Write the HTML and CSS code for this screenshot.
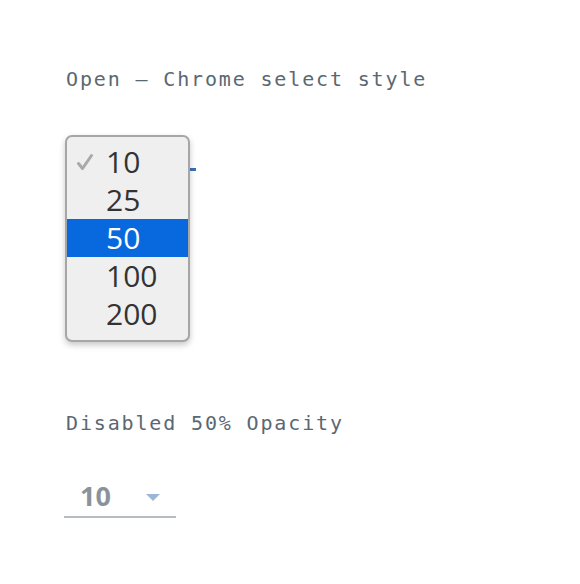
FILE: index.html
```html
<!DOCTYPE html>
<html>
<head>
<meta charset="utf-8">
<link rel="stylesheet" href="styles.css">
</head>
<body>
<main class="page">
  <section class="demo">
    <p class="label">Open — Chrome select style</p>
    <div class="select-wrap">
      <div class="field field-open">
        <svg class="arrow" width="14" height="7" viewBox="0 0 14 7"><path d="M0 0h14L7 7z"/></svg>
      </div>
      <ul class="popup">
        <li class="option"><span class="check"><svg width="18" height="18" viewBox="0 0 18 18"><path d="M2.5 10.5 L6.5 15.5 L15.5 2.5" fill="none" stroke="#a9a9a9" stroke-width="3" stroke-linecap="round" stroke-linejoin="round"/></svg></span><span>10</span></li>
        <li class="option"><span class="check"></span><span>25</span></li>
        <li class="option selected"><span class="check"></span><span>50</span></li>
        <li class="option"><span class="check"></span><span>100</span></li>
        <li class="option"><span class="check"></span><span>200</span></li>
      </ul>
    </div>
  </section>
  <section class="demo demo-disabled">
    <p class="label">Disabled 50% Opacity</p>
    <div class="field field-disabled">
      <span class="value">10</span>
      <svg class="arrow" width="14" height="7" viewBox="0 0 14 7"><path d="M0 0h14L7 7z"/></svg>
    </div>
  </section>
</main>
</body>
</html>
```
FILE: styles.css
```css
html, body {
  margin: 0;
  padding: 0;
  background: #ffffff;
}

.page {
  padding: 67px 0 0 64px;
  font-family: "DejaVu Sans Mono", "Liberation Mono", monospace;
}

.label {
  margin: 0;
  padding-left: 2px;
  font-size: 20px;
  line-height: 24px;
  letter-spacing: 1.85px;
  color: #5a6872;
}

.select-wrap {
  position: relative;
  margin-top: 40px;
  width: 132px;
}

.field {
  box-sizing: border-box;
  height: 40px;
  display: flex;
  align-items: center;
  padding: 0 16px;
  font-family: "Open Sans", "Liberation Sans", sans-serif;
  font-weight: 700;
  font-size: 27px;
  color: #152935;
}

.field .value {
  line-height: 1;
  margin-top: -3px;
}

.field .arrow {
  margin-left: auto;
  fill: #3d70b2;
}

.field-open {
  width: 128px;
  margin-left: 4px;
  border-bottom: 3px solid #3d70b2;
}

.field-disabled {
  width: 112px;
  border-bottom: 2px solid #6d7a85;
  opacity: 0.5;
}

.popup {
  position: absolute;
  top: 4px;
  left: 1px;
  width: 125px;
  box-sizing: border-box;
  margin: 0;
  padding: 6px 0 7px;
  list-style: none;
  background: #efefef;
  border: 2px solid #a6a6a6;
  border-radius: 7px;
  box-shadow: 0 3px 6px rgba(0, 0, 0, 0.22);
  font-family: "Open Sans", "Liberation Sans", sans-serif;
  font-size: 30px;
  color: #333333;
}

.option {
  height: 38px;
  display: flex;
  align-items: center;
  line-height: 1;
}

.option .check {
  width: 39px;
  height: 18px;
  padding-left: 9px;
  box-sizing: border-box;
  display: flex;
  align-items: center;
}

.option.selected {
  background: #0868de;
  color: #ffffff;
}

.demo-disabled {
  margin-top: 240px;
}

.demo-disabled .field {
  margin-top: 43px;
}
```
